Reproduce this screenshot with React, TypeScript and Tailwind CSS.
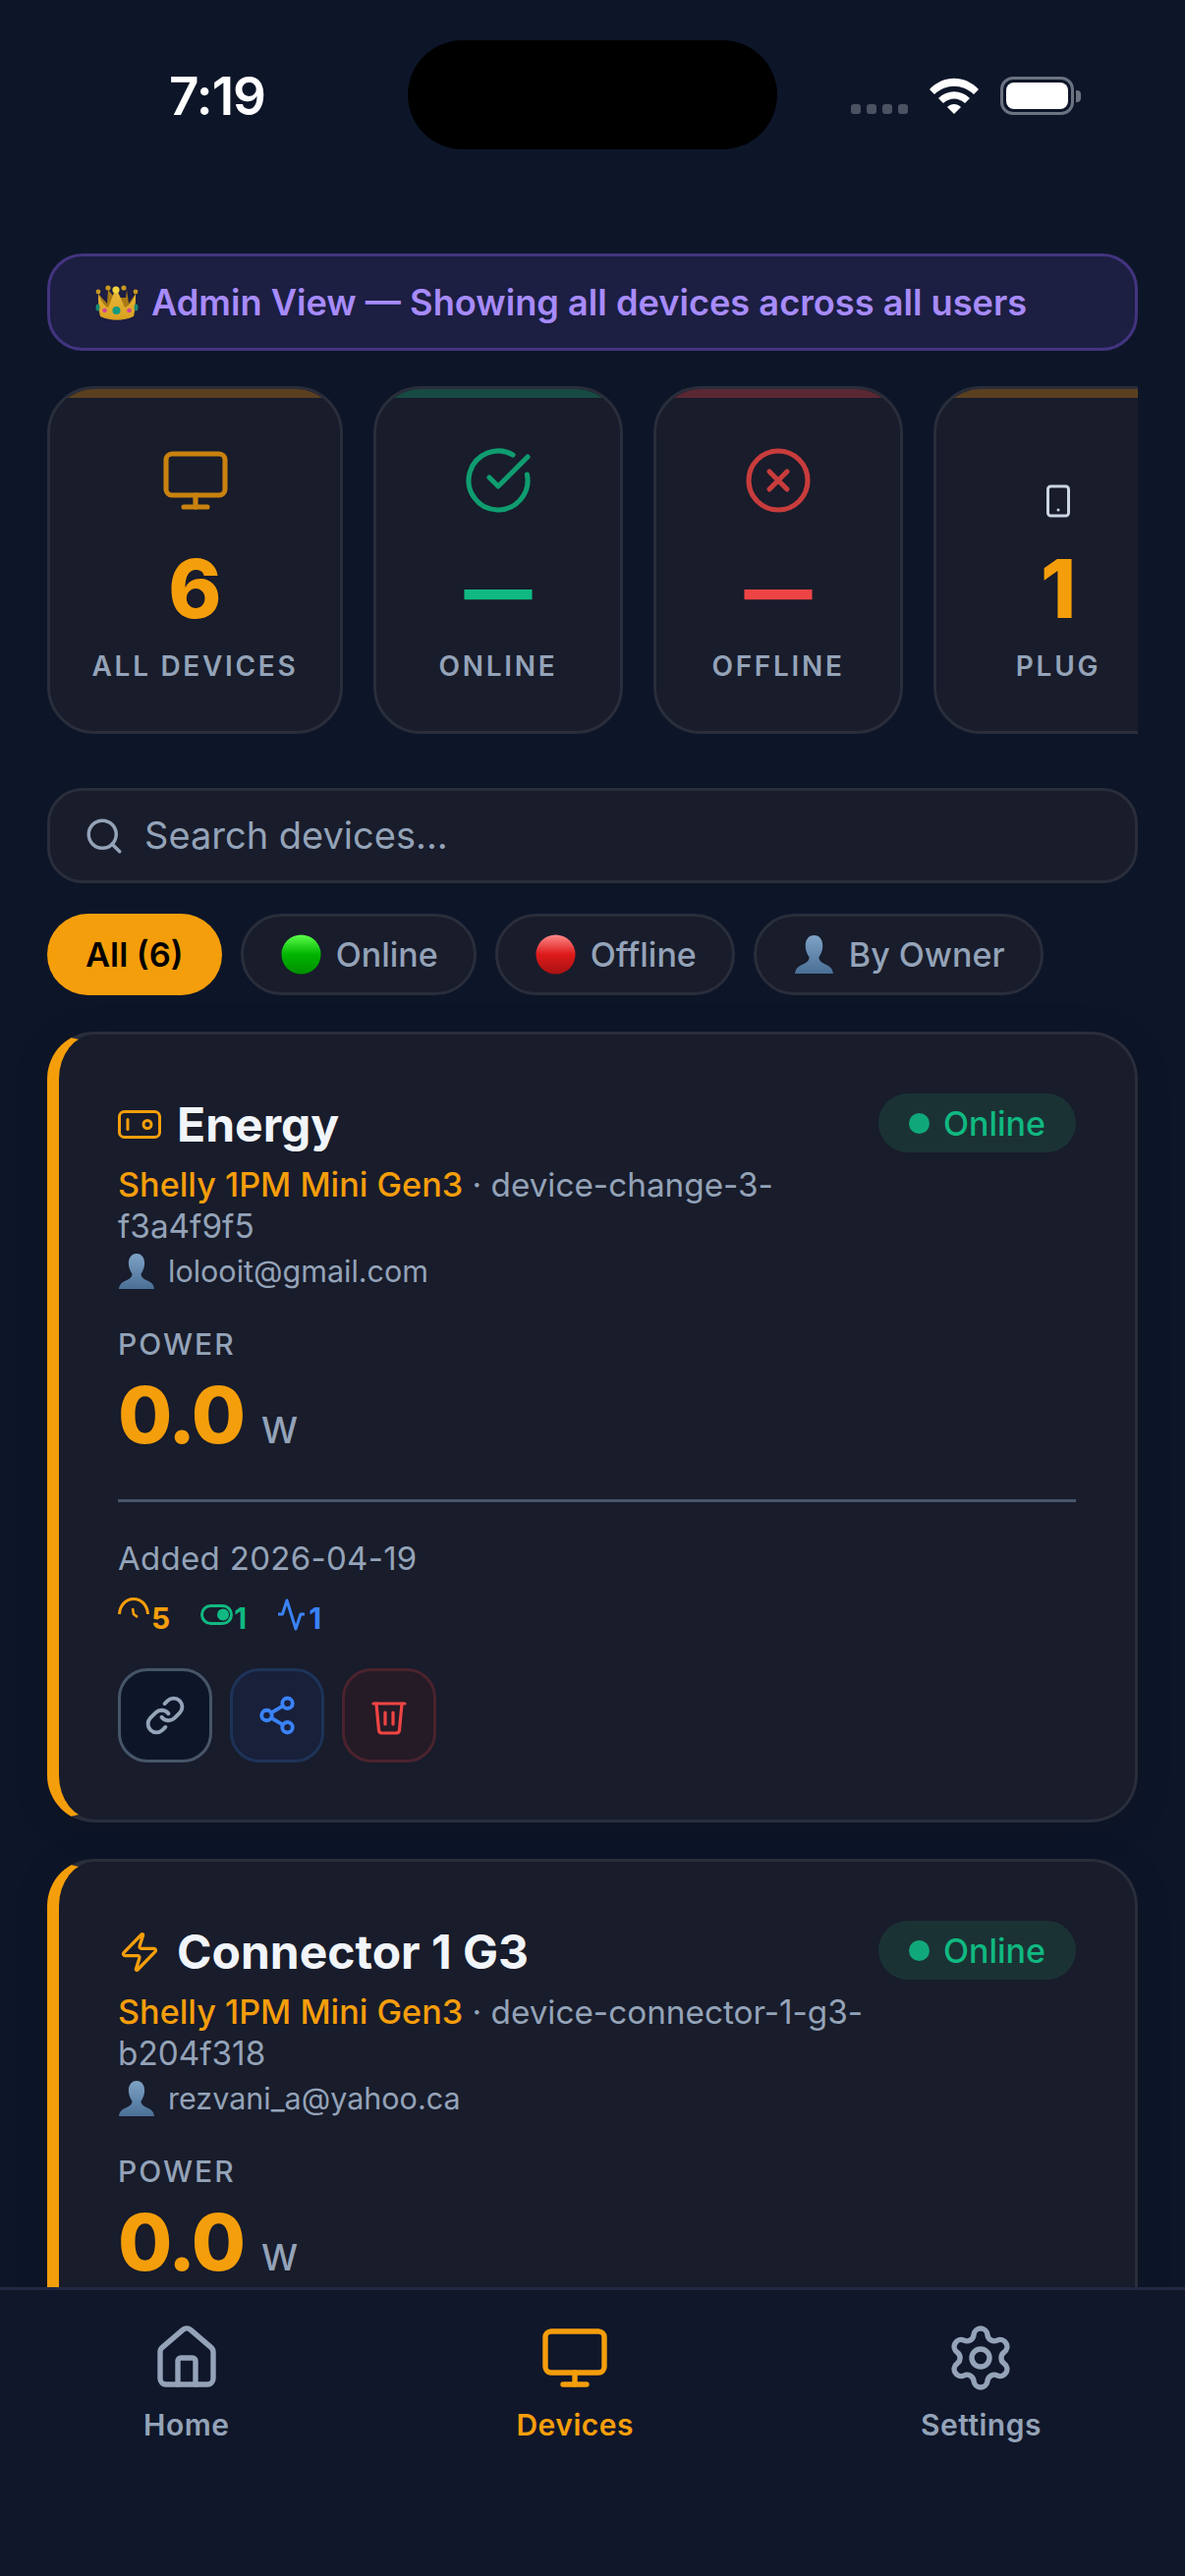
import { Monitor, CircleCheckBig, CircleX, Smartphone, Search, Link, Share2, House, Settings, Zap } from "lucide-react";

function Crown() {
  return (
    <svg width="44" height="40" viewBox="0 0 44 40" className="shrink-0">
      <defs>
        <linearGradient id="cg" x1="0" y1="0" x2="0" y2="1">
          <stop offset="0" stopColor="#e9b93a" />
          <stop offset="1" stopColor="#d9a020" />
        </linearGradient>
      </defs>
      <path d="M6 30 L3 10 L12 20 L13 6 L20 14 L31 14 L32 6 L34 20 L41 10 L38 30 Z" fill="#a97a15" />
      <path d="M5 33 C3 26 3 18 3 10 C6 18 9 22 13 24 C16 18 18 10 21 5 C25 11 27 18 30 24 C35 22 38 17 41 10 C41 18 41 26 39 33 C28 38 16 38 5 33 Z" fill="url(#cg)" />
      <circle cx="3" cy="8" r="2.4" fill="#c8981e" />
      <circle cx="13" cy="4" r="2.6" fill="#c8981e" />
      <circle cx="29" cy="4" r="2.6" fill="#c8981e" />
      <circle cx="41" cy="8" r="2.4" fill="#c8981e" />
      <circle cx="21" cy="6" r="3.6" fill="#f1d23f" />
      <ellipse cx="2.5" cy="24" rx="2" ry="3.4" fill="#178a70" />
      <ellipse cx="41.5" cy="24" rx="2" ry="3.4" fill="#178a70" />
      <circle cx="9.5" cy="27" r="2.3" fill="#d5439a" />
      <circle cx="34.5" cy="27" r="2.3" fill="#d5439a" />
      <circle cx="21.5" cy="27" r="4" fill="#129a80" />
    </svg>
  );
}

function Ball({ id, light, mid, dark }: { id: string; light: string; mid: string; dark: string }) {
  return (
    <svg width="41" height="41" viewBox="0 0 42 42" className="shrink-0">
      <defs>
        <linearGradient id={id} x1="0" y1="0" x2="0" y2="1">
          <stop offset="0" stopColor={light} />
          <stop offset="0.5" stopColor={mid} />
          <stop offset="1" stopColor={dark} />
        </linearGradient>
      </defs>
      <circle cx="21" cy="21" r="20.5" fill={`url(#${id})`} />
    </svg>
  );
}

function Bust({ size, id }: { size: number; id: string }) {
  return (
    <svg width={size} height={size} viewBox="0 0 42 42" className="shrink-0">
      <defs>
        <linearGradient id={id} x1="0" y1="0" x2="0" y2="1">
          <stop offset="0" stopColor="#7fa3c6" />
          <stop offset="1" stopColor="#4a6f96" />
        </linearGradient>
      </defs>
      <path d="M21 1 C27 1 30 6 30 12 C30 17 28 21 26 24 C26 27 28 29 32 31 C37 33 40 35 41 41 L1 41 C2 35 5 33 10 31 C14 29 16 27 16 24 C14 21 12 17 12 12 C12 6 15 1 21 1 Z" fill={`url(#${id})`} />
    </svg>
  );
}

function StatusBar() {
  return (
    <div className="relative h-[258px] shrink-0">
      <div className="flex items-start justify-between pl-[172px] pr-[106px] pt-[68px]">
        <span className="text-[53px] leading-[60px] font-semibold tracking-[-1px] text-white">7:19</span>
        <div className="mt-[10px] flex items-end gap-[21px]">
          <div className="mb-[1px] flex gap-[6px]">
            <div className="h-[10px] w-[10px] rounded-[3px] bg-[#4b5262]" />
            <div className="h-[10px] w-[10px] rounded-[3px] bg-[#4b5262]" />
            <div className="h-[10px] w-[10px] rounded-[3px] bg-[#4b5262]" />
            <div className="h-[10px] w-[10px] rounded-[3px] bg-[#4b5262]" />
          </div>
          <svg width="52" height="38" viewBox="0 0 52 38">
            <path d="M1 12 C15 -3 37 -3 51 12 L46 17 C34 6 18 6 6 17 Z" fill="#fff" />
            <path d="M10 21 C19 12 33 12 42 21 L37 26 C30 20 22 20 15 26 Z" fill="#fff" />
            <path d="M19 30 C23 26 29 26 33 30 L26 37 Z" fill="#fff" />
          </svg>
          <div className="flex items-center gap-[2px]">
            <div className="h-[39px] w-[75px] rounded-[13px] border-[3px] border-[#6b7280] p-[3px]">
              <div className="h-full w-full rounded-[8px] bg-white" />
            </div>
            <div className="h-[12px] w-[5px] rounded-r-[4px] bg-[#6b7280]" />
          </div>
        </div>
      </div>
      <div className="absolute left-[415px] top-[41px] h-[111px] w-[376px] rounded-[56px] bg-black" />
    </div>
  );
}

function StatCard({ width, bar, value, valueClass, label, icon }: { width: string; bar: string; value: string; valueClass: string; label: string; icon: React.ReactNode }) {
  return (
    <div className={`${width} flex h-[354px] shrink-0 flex-col items-center overflow-hidden rounded-[48px] border-[3px] border-[#2a2d3a] bg-[#181c2b]`}>
      <div className={`${bar} h-[9px] w-full shrink-0`} />
      <div className="mt-[48px] flex h-[72px] items-center justify-center">{icon}</div>
      <div className={`${valueClass} mt-[24px] leading-[102px]`}>{value}</div>
      <div className="mt-[9px] text-[28px] leading-[36px] font-semibold tracking-[2.7px] text-[#94a3b8]">{label}</div>
    </div>
  );
}

function Chip({ children, active }: { children: React.ReactNode; active?: boolean }) {
  return (
    <div className={active
      ? "flex h-[83px] items-center rounded-full bg-[#f59e0b] px-[39px] text-[34.5px] font-semibold text-black"
      : "flex h-[83px] items-center gap-[15px] rounded-full border-[3px] border-[#2a2d3a] bg-[#181c2b] pl-[38px] pr-[36px] text-[34px] font-medium text-[#94a3b8]"}>
      {children}
    </div>
  );
}

function TrashIcon() {
  return (
    <svg width="36" height="36" viewBox="0 0 36 36" fill="none" stroke="#ef4444" strokeWidth="3.2" strokeLinecap="round" strokeLinejoin="round" className="mt-[6px]">
      <path d="M2 3 H34" />
      <path d="M5 3 L7.5 30 C7.7 32 9 33 11 33 H25 C27 33 28.3 32 28.5 30 L31 3" />
      <path d="M14 12 V24" />
      <path d="M22 12 V24" />
    </svg>
  );
}

function SocketIcon() {
  return (
    <svg width="44" height="30" viewBox="0 0 44 30" fill="none" stroke="#f59e0b" strokeWidth="3" strokeLinecap="round">
      <rect x="1.5" y="1.5" width="41" height="26" rx="5" />
      <path d="M10 9.5 V19.5" />
      <circle cx="30" cy="14.5" r="4" />
    </svg>
  );
}

function ClockClip() {
  return (
    <svg width="34" height="34" viewBox="0 0 34 34" fill="none" stroke="#f59e0b" strokeWidth="3">
      <path d="M1.5 17 C2 8 8 1.5 16 1.5 C24 1.5 30 8 30.5 17" />
      <path d="M15 11 L16 17 L20 20" strokeWidth="2.6" />
    </svg>
  );
}

function ToggleIcon() {
  return (
    <svg width="34" height="34" viewBox="0 0 34 34" fill="none">
      <rect x="1.5" y="8.5" width="30" height="18" rx="9" stroke="#10b981" strokeWidth="3" />
      <circle cx="23" cy="17.5" r="6" fill="#10b981" />
    </svg>
  );
}

function PulseIcon() {
  return (
    <svg width="32" height="34" viewBox="0 0 32 34" fill="none" stroke="#3b82f6" strokeWidth="3" strokeLinejoin="round" strokeLinecap="butt">
      <path d="M1 17 H5.5 L10 3 L19 32 L24 17 H28" />
    </svg>
  );
}

function DeviceCard({ title, icon, model, sub, email, id, tail }: { title: string; icon: React.ReactNode; model: string; sub: string; email: string; id: string; tail?: boolean }) {
  return (
    <div className="h-[805px] shrink-0 rounded-[48px] border-[3px] border-l-[12px] border-[#2a2d3a] border-l-[#f59e0b] bg-[#181c2b] px-[60px] pt-[60px] shadow-[0_6px_36px_rgba(0,0,0,0.15)]">
      <div className="flex items-start justify-between">
        <div className="w-[768px]">
          <div className="mt-[5px] flex h-[54px] items-center gap-[16px]">
            <div className="flex w-[44px] shrink-0 justify-center">{icon}</div>
            <span className="text-[48px] leading-[54px] font-bold text-[#f1f5f9]">{title}</span>
          </div>
          <div className="mt-[13px] text-[33.3px] leading-[42px] text-[#94a3b8]">
            <span className="text-[34.2px] font-medium text-[#f59e0b]">{model}</span> · {sub}
          </div>
          <div className="mt-[5px] flex h-[40px] items-center gap-[13px] text-[30.5px] text-[#94a3b8]">
            <Bust size={38} id={id} />
            <span>{email}</span>
          </div>
        </div>
        <div className="flex h-[60px] items-center gap-[14px] rounded-full bg-[#1b3235] px-[31px] text-[34px] font-medium text-[#10b981]">
          <div className="h-[21px] w-[21px] rounded-full bg-[#10a87a]" />
          Online
        </div>
      </div>
      <div className="mt-[36px] text-[30px] leading-[36px] font-medium tracking-[2px] text-[#94a3b8]">POWER</div>
      <div className="mt-[6px] flex items-baseline gap-[18px]">
        <span className="text-[80px] leading-[96px] font-extrabold tracking-[-2px] text-[#f59e0b]">0.0</span>
        <span className="text-[37px] font-medium text-[#94a3b8]">W</span>
      </div>
      {tail ? (
        <>
          <div className="mt-[38px] h-[3px] bg-[#475569]" />
          <div className="mt-[36px] text-[33px] leading-[42px] tracking-[0.3px] text-[#94a3b8]">Added 2026-04-19</div>
          <div className="mt-[19px] flex items-start gap-[31px] text-[30px] leading-[34px] font-bold">
            <div className="flex text-[#f59e0b]"><ClockClip /><span className="mt-[4px]">5</span></div>
            <div className="flex text-[#10b981]"><ToggleIcon /><span className="mt-[4px]">1</span></div>
            <div className="flex text-[#3b82f6]"><PulseIcon /><span className="mt-[4px]">1</span></div>
          </div>
          <div className="mt-[34px] flex gap-[18px]">
            <div className="flex h-[96px] w-[96px] items-center justify-center rounded-[30px] border-[3px] border-[#475569] bg-[#0d1629]">
              <Link size={42} color="#94a3b8" strokeWidth={2.2} />
            </div>
            <div className="flex h-[96px] w-[96px] items-center justify-center rounded-[30px] border-[3px] border-[#1e3358] bg-[#18203a]">
              <Share2 size={42} color="#3b82f6" strokeWidth={2.2} />
            </div>
            <div className="flex h-[96px] w-[96px] items-center justify-center rounded-[30px] border-[3px] border-[#4a232e] bg-[#241b26]">
              <TrashIcon />
            </div>
          </div>
        </>
      ) : null}
    </div>
  );
}

function NavItem({ label, icon, active }: { label: string; icon: React.ReactNode; active?: boolean }) {
  return (
    <div className={`flex flex-col items-center ${active ? "text-[#f59e0b]" : "text-[#94a3b8]"}`}>
      {icon}
      <span className="mt-[14px] text-[30px] leading-[36px] font-semibold tracking-[0.5px]">{label}</span>
    </div>
  );
}

export default function App() {
  return (
    <div className="flex h-[2622px] w-[1206px] flex-col overflow-hidden bg-[#0d1629] font-[Inter,sans-serif]">
      <StatusBar />
      <div className="min-h-0 flex-1 overflow-hidden px-[48px]">
        <div className="flex h-[99px] items-center gap-[13px] rounded-[36px] border-[3px] border-[#43347f] bg-[#1c1e42] pl-[46px] pt-[2px] text-[36.2px] font-semibold text-[#a78bfa]">
          <Crown />
          <span>Admin View — Showing all devices across all users</span>
        </div>
        <div className="mt-[36px] flex gap-[31px] overflow-hidden">
          <StatCard width="w-[301px]" bar="bg-[#5a4020]" value="6" valueClass="text-[82px] font-extrabold text-[#f59e0b]" label="ALL DEVICES" icon={<Monitor size={72} strokeWidth={1.7} color="#c9820f" />} />
          <StatCard width="w-[254px]" bar="bg-[#174a43]" value="—" valueClass="text-[69px] font-black text-[#10b981]" label="ONLINE" icon={<CircleCheckBig size={72} strokeWidth={1.7} color="#0f9d70" />} />
          <StatCard width="w-[254px]" bar="bg-[#5a2833]" value="—" valueClass="text-[69px] font-black text-[#ef4444]" label="OFFLINE" icon={<CircleX size={72} strokeWidth={1.7} color="#c83c3c" />} />
          <StatCard width="w-[254px]" bar="bg-[#5a4020]" value="1" valueClass="text-[82px] font-extrabold text-[#f59e0b]" label="PLUG" icon={<Smartphone size={36} strokeWidth={2} color="#cbd5e1" className="mt-[42px]" />} />
        </div>
        <div className="mt-[55px] flex h-[97px] items-center gap-[20px] rounded-[36px] border-[3px] border-[#2a2d3a] bg-[#181c2b] pl-[34px] text-[38px] text-[#94a3b8]">
          <Search size={42} strokeWidth={2} color="#94a3b8" />
          <span>Search devices...</span>
        </div>
        <div className="mt-[31px] flex gap-[19px]">
          <Chip active>All (6)</Chip>
          <Chip><Ball id="g1" light="#5cff4a" mid="#00b400" dark="#008f00" />Online</Chip>
          <Chip><Ball id="r1" light="#ff8a8a" mid="#dd1a1a" dark="#a81212" />Offline</Chip>
          <Chip><Bust size={41} id="b1" />By Owner</Chip>
        </div>
        <div className="mt-[37px] flex flex-col gap-[37px]">
          <DeviceCard title="Energy" icon={<SocketIcon />} model="Shelly 1PM Mini Gen3" sub="device-change-3-f3a4f9f5" email="lolooit@gmail.com" id="b2" tail />
          <DeviceCard title="Connector 1 G3" icon={<Zap size={48} strokeWidth={1.8} color="#f59e0b" />} model="Shelly 1PM Mini Gen3" sub="device-connector-1-g3-b204f318" email="rezvani_a@yahoo.ca" id="b3" />
        </div>
      </div>
      <div className="flex h-[294px] shrink-0 justify-around border-t-[3px] border-[#232842] bg-[#10172a] pt-[33px]">
        <NavItem label="Home" icon={<House size={72} strokeWidth={1.8} />} />
        <NavItem label="Devices" active icon={<Monitor size={72} strokeWidth={1.8} />} />
        <NavItem label="Settings" icon={<Settings size={72} strokeWidth={1.8} />} />
      </div>
    </div>
  );
}
